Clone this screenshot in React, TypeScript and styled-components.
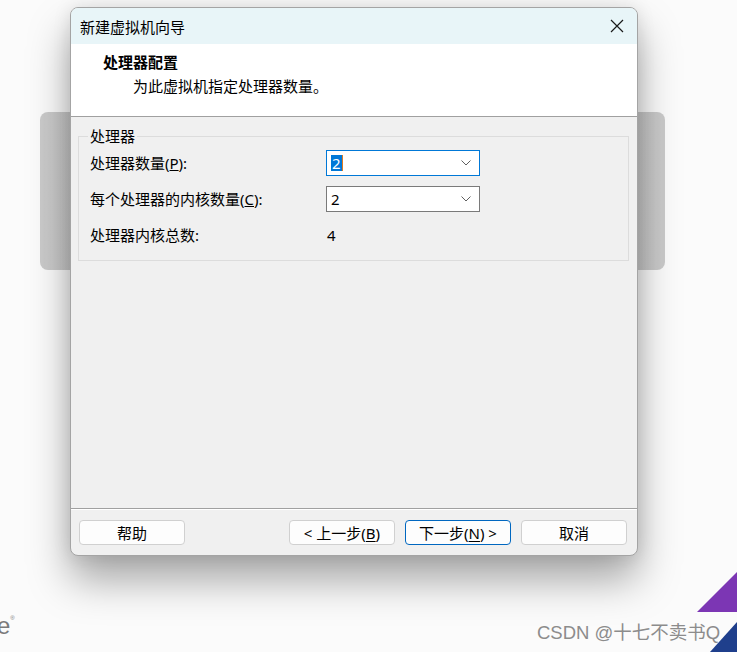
import React from 'react'
import styled, { createGlobalStyle } from 'styled-components'

const GlobalStyle = createGlobalStyle`
  html, body {
    margin: 0;
    padding: 0;
    background: #ffffff;
  }
  body {
    font-family: "Noto Sans", "Noto Sans CJK SC", sans-serif;
  }
`

const Stage = styled.div`
  position: relative;
  width: 737px;
  height: 652px;
  overflow: hidden;
  background: #fbfbfb;
  padding: 7px 0 0 70px;
  box-sizing: border-box;
`

const Backdrop = styled.div`
  position: absolute;
  left: 40px;
  top: 112px;
  width: 625px;
  height: 158px;
  border-radius: 8px;
  background: linear-gradient(90deg, #cbcbcb, #c6c6c6 50%, #cbcbcb);
`

const BrandFragment = styled.div`
  position: absolute;
  left: -3px;
  top: 603px;
  font-family: "Liberation Sans", sans-serif;
  font-size: 24px;
  line-height: 30px;
  color: #7a7a7a;

  sup {
    font-size: 6px;
    vertical-align: 14px;
  }
`

const Watermark = styled.div`
  position: absolute;
  left: 537px;
  top: 621px;
  font-family: "Liberation Sans", "Noto Sans CJK SC", sans-serif;
  font-size: 18.5px;
  line-height: 24px;
  color: #8c8c8c;
  white-space: nowrap;
`

const Corner = styled.svg`
  position: absolute;
  right: 0;
  bottom: 0;
`

const Dialog = styled.div`
  position: relative;
  z-index: 1;
  width: 568px;
  height: 549px;
  box-sizing: border-box;
  border: 1px solid #a4a4a4;
  border-radius: 8px;
  overflow: hidden;
  background: #f0f0f0;
  display: flex;
  flex-direction: column;
  box-shadow: 0 0 18px rgba(0, 0, 0, 0.1), 0 24px 42px rgba(0, 0, 0, 0.34);
`

const TitleBar = styled.div`
  height: 36px;
  flex: none;
  display: flex;
  align-items: center;
  justify-content: space-between;
  padding: 0 11px 0 9px;
  background: #e8f5f8;
  font-size: 15px;
  color: #000;
`

const CloseButton = styled.button`
  width: 18px;
  height: 18px;
  padding: 0;
  border: none;
  background: transparent;
  display: flex;
  align-items: center;
  justify-content: center;
`

const Header = styled.div`
  flex: none;
  height: 73px;
  box-sizing: border-box;
  background: #ffffff;
  border-bottom: 1px solid #a0a0a0;
  padding: 8px 0 0 32px;
`

const Heading = styled.div`
  font-size: 15px;
  font-weight: 700;
  line-height: 20px;
  color: #000;
`

const SubHeading = styled.div`
  margin: 4px 0 0 30px;
  font-size: 15px;
  line-height: 20px;
  color: #000;
`

const Body = styled.div`
  flex: 1;
  padding-top: 9px;
`

const GroupBox = styled.fieldset`
  margin: 0 8px 0 7px;
  padding: 4px 11px 12px 11px;
  border: 1px solid #dcdcdc;
  min-width: 0;
`

const Legend = styled.legend`
  padding: 0 2px;
  margin-left: -2px;
  font-size: 15px;
  line-height: 20px;
  color: #000;
`

const Grid = styled.div`
  display: grid;
  grid-template-columns: 236px 154px;
  grid-auto-rows: 26px;
  row-gap: 10px;
  align-items: center;
  font-size: 15px;
  color: #000;
`

const Label = styled.div`
  line-height: 20px;
`

const Value = styled.div`
  line-height: 20px;
  padding-left: 1px;
`

const Select = styled.div<{ $focused?: boolean }>`
  height: 26px;
  box-sizing: border-box;
  border: 1px solid ${({ $focused }) => ($focused ? '#0078d7' : '#7a7a7a')};
  background: #ffffff;
  display: flex;
  align-items: center;
  justify-content: space-between;
  padding: 0 8px 0 4px;
  font-size: 15px;
  line-height: 20px;
`

const Selected = styled.span`
  background: #0078d7;
  color: #ffffff;
  padding: 0 1px;
  line-height: 16px;
  box-shadow: 1px 0 0 #e07a1f;
`

const Footer = styled.div`
  flex: none;
  border-top: 1px solid #a0a0a0;
  box-shadow: inset 0 1px 0 #ffffff;
  padding: 11px 10px 10px 8px;
  display: flex;
  align-items: center;
  gap: 10px;
`

const Spacer = styled.div`
  flex: 1;
`

const Button = styled.button<{ $primary?: boolean }>`
  width: 106px;
  height: 25px;
  padding: 0;
  box-sizing: border-box;
  border: 1px solid ${({ $primary }) => ($primary ? '#0067c0' : '#d0d0d0')};
  border-radius: 4px;
  background: #fdfdfd;
  font-family: "Noto Sans", "Noto Sans CJK SC", sans-serif;
  font-size: 15px;
  line-height: 20px;
  color: #000;
  white-space: nowrap;

  u {
    text-underline-offset: 2px;
  }
`

const Chevron = () => (
  <svg width="10" height="6" viewBox="0 0 10 6">
    <path d="M0.5 0.5 L5 5 L9.5 0.5" fill="none" stroke="#606060" strokeWidth="1" />
  </svg>
)

export default function App() {
  return (
    <>
      <GlobalStyle />
      <Stage>
        <Backdrop />
        <BrandFragment>
          e<sup>®</sup>
        </BrandFragment>
        <Dialog>
          <TitleBar>
            <span>新建虚拟机向导</span>
            <CloseButton aria-label="关闭">
              <svg width="14" height="14" viewBox="0 0 14 14">
                <path d="M1 1 L13 13 M13 1 L1 13" stroke="#1a1a1a" strokeWidth="1.2" />
              </svg>
            </CloseButton>
          </TitleBar>
          <Header>
            <Heading>处理器配置</Heading>
            <SubHeading>为此虚拟机指定处理器数量。</SubHeading>
          </Header>
          <Body>
            <GroupBox>
              <Legend>处理器</Legend>
              <Grid>
                <Label>
                  处理器数量(<u>P</u>):
                </Label>
                <Select $focused>
                  <Selected>2</Selected>
                  <Chevron />
                </Select>
                <Label>
                  每个处理器的内核数量(<u>C</u>):
                </Label>
                <Select>
                  <span>2</span>
                  <Chevron />
                </Select>
                <Label>处理器内核总数:</Label>
                <Value>4</Value>
              </Grid>
            </GroupBox>
          </Body>
          <Footer>
            <Button>帮助</Button>
            <Spacer />
            <Button>
              &lt; 上一步(<u>B</u>)
            </Button>
            <Button $primary>
              下一步(<u>N</u>) &gt;
            </Button>
            <Button>取消</Button>
          </Footer>
        </Dialog>
        <Watermark>CSDN @十七不卖书Q</Watermark>
        <Corner width="42" height="82" viewBox="0 0 42 82">
          <polygon points="2,42 42,2 42,42" fill="#7c36b4" />
          <polygon points="15,82 42,52 42,82" fill="#1f3f8c" />
        </Corner>
      </Stage>
    </>
  )
}
